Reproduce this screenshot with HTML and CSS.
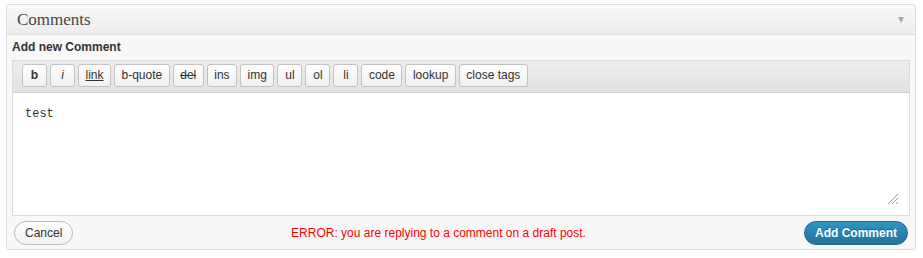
FILE: index.html
```html
<!DOCTYPE html>
<html>
<head>
<meta charset="utf-8">
<link rel="stylesheet" href="styles.css">
</head>
<body>
<div class="postbox">
  <div class="postbox-head">
    <h3 class="postbox-title">Comments</h3>
    <span class="toggle-arrow"></span>
  </div>
  <div class="postbox-inside">
    <h4 class="section-title">Add new Comment</h4>
    <div class="editor">
      <div class="qt-toolbar">
        <button class="qt-btn qt-bold">b</button>
        <button class="qt-btn qt-italic">i</button>
        <button class="qt-btn qt-link">link</button>
        <button class="qt-btn">b-quote</button>
        <button class="qt-btn qt-del">del</button>
        <button class="qt-btn">ins</button>
        <button class="qt-btn">img</button>
        <button class="qt-btn">ul</button>
        <button class="qt-btn">ol</button>
        <button class="qt-btn">li</button>
        <button class="qt-btn">code</button>
        <button class="qt-btn">lookup</button>
        <button class="qt-btn">close tags</button>
      </div>
      <div class="editor-area">
        <div class="editor-text">test</div>
        <svg class="resize-handle" width="12" height="12" viewBox="0 0 12 12">
          <line x1="11" y1="1" x2="1" y2="11" stroke="#9a9a9a" stroke-width="1"/>
          <line x1="11" y1="5" x2="5" y2="11" stroke="#9a9a9a" stroke-width="1"/>
          <line x1="11" y1="9" x2="9" y2="11" stroke="#9a9a9a" stroke-width="1"/>
        </svg>
      </div>
    </div>
    <div class="form-footer">
      <button class="pill-btn btn-cancel">Cancel</button>
      <div class="error-msg">ERROR: you are replying to a comment on a draft post.</div>
      <button class="pill-btn btn-primary">Add Comment</button>
    </div>
  </div>
</div>
</body>
</html>
```

FILE: styles.css
```css
html, body {
  margin: 0;
  padding: 0;
  background: #ffffff;
}

body {
  padding: 4px 7px 0 6px;
  font-family: "Liberation Sans", Arial, sans-serif;
  font-size: 12px;
  color: #333;
}

.postbox {
  border: 1px solid #dfdfdf;
  border-radius: 3px;
  background: #f8f8f9;
  box-shadow: 0 1px 0 #fff inset;
}

.postbox-head {
  display: flex;
  align-items: center;
  height: 29px;
  border-bottom: 1px solid #dfdfdf;
  background: linear-gradient(to bottom, #f9f9f9, #ececec);
  border-radius: 3px 3px 0 0;
}

.postbox-title {
  flex: 1;
  margin: 0;
  padding-left: 10px;
  font-family: "Liberation Serif", "Times New Roman", serif;
  font-weight: normal;
  font-size: 17px;
  line-height: 29px;
  color: #464646;
}

.toggle-arrow {
  width: 0;
  height: 0;
  border-left: 3.5px solid transparent;
  border-right: 3.5px solid transparent;
  border-top: 6px solid #aaa;
  margin-right: 11px;
  margin-top: 1px;
}

.postbox-inside {
  padding: 4px 5px 4px 5px;
}

.section-title {
  margin: 0 0 5px 0;
  font-size: 12px;
  line-height: 16px;
  font-weight: bold;
  color: #333;
}

.editor {
  border: 1px solid #dcdcdc;
}

.qt-toolbar {
  display: flex;
  gap: 3px;
  padding: 3px 8px 5px 9px;
  border-bottom: 1px solid #d1d1d1;
  background: linear-gradient(to bottom, #ededed, #e2e2e2);
}

.qt-btn {
  box-sizing: border-box;
  height: 23px;
  min-width: 25px;
  padding: 0 6.5px;
  margin: 0;
  border: 1px solid #c3c3c3;
  border-radius: 3px;
  background: linear-gradient(to bottom, #fefefe, #f1f1f1);
  font-family: "Liberation Sans", Arial, sans-serif;
  font-size: 12px;
  line-height: 21px;
  color: #333;
}

.qt-bold { font-weight: bold; }
.qt-italic { font-style: italic; }
.qt-link { text-decoration: underline; }
.qt-del { text-decoration: line-through; }

.editor-area {
  position: relative;
  height: 122px;
  background: #fff;
}

.editor-text {
  padding: 13px 12px 0 12px;
  font-family: "Liberation Mono", "DejaVu Sans Mono", monospace;
  font-size: 12px;
  line-height: 16px;
  color: #333;
}

.resize-handle {
  position: absolute;
  right: 10px;
  bottom: 10px;
}

.form-footer {
  display: flex;
  align-items: center;
  margin-top: 5px;
}

.pill-btn {
  box-sizing: border-box;
  height: 24px;
  padding: 0 10px;
  border-radius: 12px;
  font-family: "Liberation Sans", Arial, sans-serif;
  font-size: 12px;
  line-height: 22px;
  margin: 0;
}

.btn-cancel {
  margin-left: 2px;
  width: 59px;
  border: 1px solid #bbb;
  background: linear-gradient(to bottom, #fefefe, #f2f2f2);
  color: #333;
}

.btn-primary {
  margin-right: 2px;
  width: 104px;
  border: 1px solid #1f6a8c;
  background: linear-gradient(to bottom, #2e96c4, #22739a);
  color: #fff;
  font-weight: bold;
  text-shadow: 0 -1px 0 rgba(0, 0, 0, 0.3);
}

.error-msg {
  flex: 1;
  text-align: center;
  color: #ff0000;
  font-size: 12px;
  line-height: 16px;
}
```
